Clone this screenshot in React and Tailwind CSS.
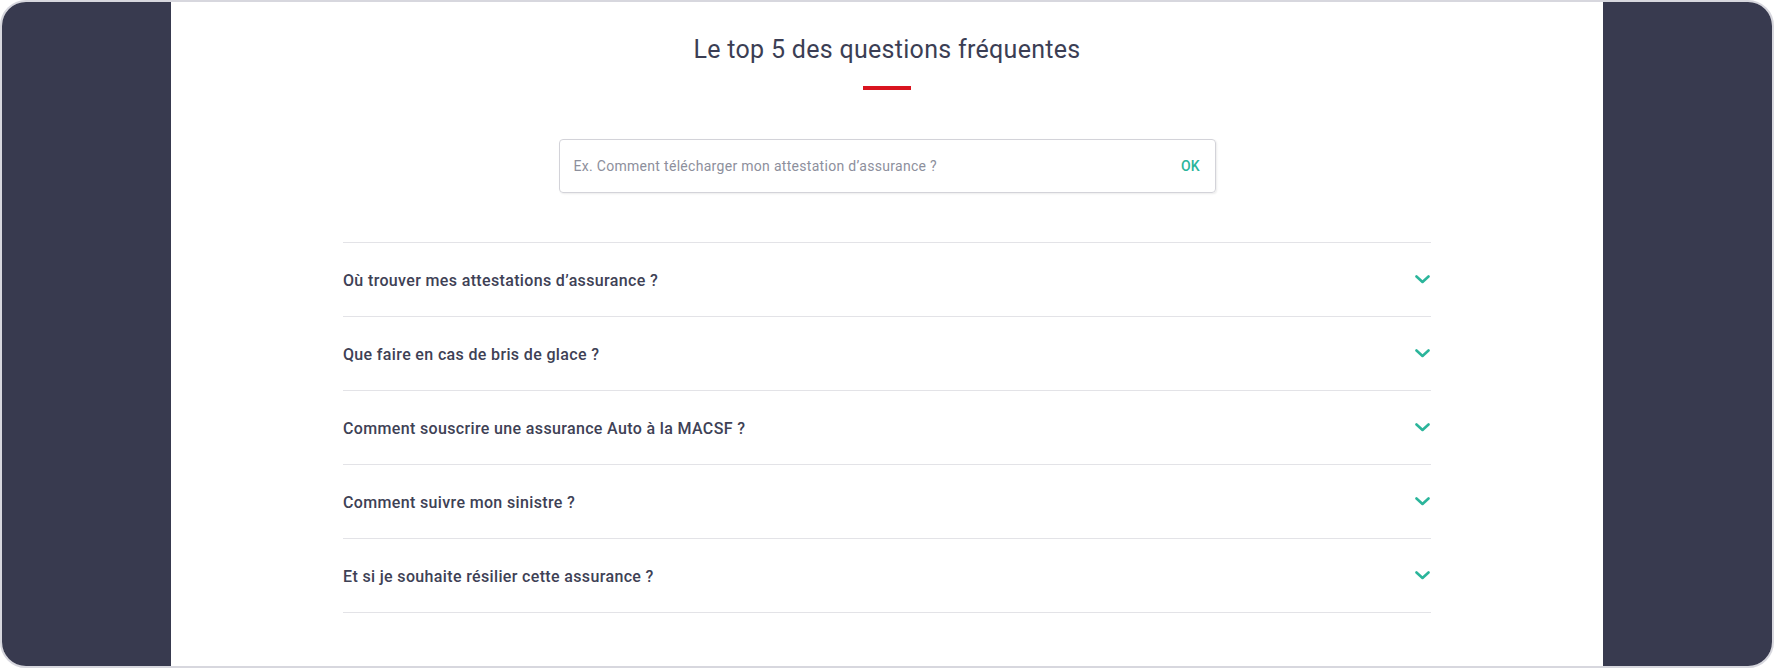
const QUESTIONS = [
    'Où trouver mes attestations d’assurance ?',
    'Que faire en cas de bris de glace ?',
    'Comment souscrire une assurance Auto à la MACSF ?',
    'Comment suivre mon sinistre ?',
    'Et si je souhaite résilier cette assurance ?',
];

const Chevron = () => (
    <svg width="15" height="9" viewBox="0 0 15 9" fill="none" className="shrink-0">
        <path d="M1.5 1.5 L7.5 7 L13.5 1.5" stroke="#2bb59b" strokeWidth="2.6" strokeLinecap="round" strokeLinejoin="round" />
    </svg>
);

const App = () => {
    return (
        <div className="w-full h-[668px] bg-white" style={{ fontFamily: 'Roboto, "Liberation Sans", sans-serif' }}>
            <div className="h-full flex rounded-[26px] border-2 border-[#d7d7de] overflow-hidden">
                <div className="w-[169px] bg-[#383a4f]" />

                <div className="flex-1 bg-white flex flex-col items-center pt-[33px]">
                    <h2 className="text-[25px] leading-[30px] text-[#3b3e54] font-normal tracking-[0.3px]">
                        Le top 5 des questions fréquentes
                    </h2>
                    <div className="mt-[21px] w-[48px] h-[4px] bg-[#d9141f]" />

                    {/* Search */}
                    <div className="mt-[49px] w-[657px] h-[54px] flex items-center justify-between pl-[14px] pr-[15px] border border-[#d3d3d9] rounded-[4px] shadow-[1px_1px_2px_rgba(0,0,0,0.08)]">
                        <span className="text-[14px] tracking-[0.3px] text-[#8d8f9c]">
                            Ex. Comment télécharger mon attestation d’assurance ?
                        </span>
                        <button className="text-[14px] font-medium text-[#2bb59b]">OK</button>
                    </div>

                    {/* FAQ */}
                    <div className="mt-[49px] w-[1088px] border-t border-[#e3e3e7]">
                        {QUESTIONS.map(q => (
                            <div key={q} className="h-[74px] flex items-center justify-between border-b border-[#e3e3e7] pr-[1px]">
                                <span className="text-[16px] font-medium tracking-[0.35px] text-[#3e4155] pt-[2px]">{q}</span>
                                <Chevron />
                            </div>
                        ))}
                    </div>
                </div>

                <div className="w-[169px] bg-[#383a4f]" />
            </div>
        </div>
    );
};

export default App;
